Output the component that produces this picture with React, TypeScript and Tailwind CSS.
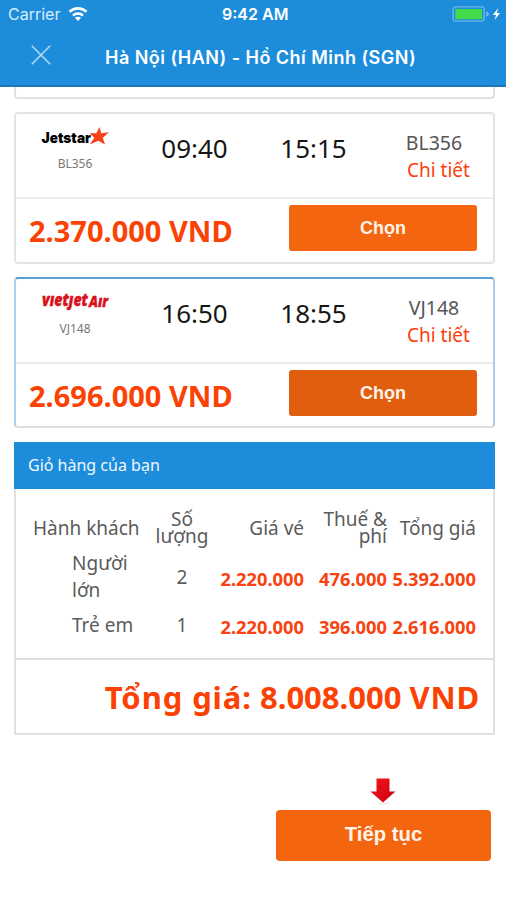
import clsx from "clsx"

const flights = [
  { code: "BL356", depart: "09:40", arrive: "15:15", price: "2.370.000", airline: "jetstar", active: false },
  { code: "VJ148", depart: "16:50", arrive: "18:55", price: "2.696.000", airline: "vietjet", active: true },
]

const JetstarLogo = () => (
  <svg width="70" height="24" viewBox="0 0 70 24" className="overflow-visible">
    <text
      x="0.5"
      y="16.5"
      textLength="49.5"
      lengthAdjust="spacingAndGlyphs"
      className="fill-black font-['Inter'] text-[14.5px] font-black"
    >
      Jetstar
    </text>
    <path
      d="M58.5 1 L60.3 7.2 L68 6.2 L61.8 11.8 L64 18.4 L57.4 14.7 L48.8 18.5 L53.3 11.8 L48.6 7.3 L55.3 7.3 Z"
      fill="#f9421a"
    />
  </svg>
)

const VietjetLogo = () => (
  <svg width="70" height="24" viewBox="0 0 70 24" className="overflow-visible">
    <g fill="#d9121c" stroke="#d9121c" strokeWidth="0.4" className="font-['Open_Sans'] font-extrabold italic">
      <text x="1" y="14.5" textLength="46" lengthAdjust="spacingAndGlyphs" fontSize="17">
        vıetȷet
      </text>
      <text x="48" y="15.5" textLength="19" lengthAdjust="spacingAndGlyphs" fontSize="15">
        Aır
      </text>
    </g>
  </svg>
)

const StatusBar = () => (
  <div className="relative flex h-7 items-center justify-between pl-2 pr-[5px]">
    <div className="flex items-center">
      <span className="w-[60px] text-[16px] text-[#d8ecfb]">Carrier</span>
      <svg width="20" height="16" viewBox="0 0 20 16" fill="none" stroke="#fff" strokeWidth="2.6">
        <path d="M1.5 5.8 C6.3 1.2 13.7 1.2 18.5 5.8" />
        <path d="M5 9.5 C7.8 6.9 12.2 6.9 15 9.5" />
        <path d="M10 15 L6.9 11.8 C8.6 10.3 11.4 10.3 13.1 11.8 Z" fill="#fff" stroke="none" />
      </svg>
    </div>
    <span className="absolute left-[222px] top-0.5 text-[16px] leading-6 font-semibold text-white">9:42 AM</span>
    <svg width="49" height="16" viewBox="0 0 49 16">
      <rect x="1.2" y="0.9" width="31" height="14.2" rx="2.5" fill="none" stroke="#69b5ea" strokeWidth="1.4" />
      <rect x="3.2" y="2.9" width="27" height="10.4" rx="0.8" fill="#43da4b" />
      <path d="M34 5.5 Q37 6 37 8 Q37 10 34 10.5 Z" fill="#69b5ea" />
      <path d="M46.2 2 L40.8 9 H44 L42.6 14 L48 7 H44.8 Z" fill="#fff" />
    </svg>
  </div>
)

const Header = () => (
  <header className="h-[87px] border-b-2 border-[#1c78b8] bg-[#1d8ddb] font-['Inter',sans-serif]">
    <StatusBar />
    <div className="flex h-[57px] items-center pl-[31px]">
      <svg width="20" height="20" viewBox="0 0 20 20" stroke="#b5dcf8" strokeWidth="1.5" className="-mt-1">
        <path d="M0.8 0.8 L19.2 19.2 M19.2 0.8 L0.8 19.2" />
      </svg>
      <h1 className="ml-[54px] mt-0.5 whitespace-nowrap text-[18px] font-semibold tracking-[0.46px] text-white">
        Hà Nội (HAN) - Hồ Chí Minh (SGN)
      </h1>
    </div>
  </header>
)

const FlightCard = ({ flight }: { flight: (typeof flights)[number] }) => (
  <div
    className={clsx(
      "rounded-[4px] border-2",
      flight.active ? "h-[151px] border-[#a9cfec] border-t-[#559fd6] border-b-[#dedede]" : "h-[152px] border-[#e3e3e3]"
    )}
  >
    <div className="flex h-[85px] border-b-2 border-[#ececec]">
      <div className="flex w-[119px] flex-col items-center pt-3">
        {flight.airline === "jetstar" ? <JetstarLogo /> : <VietjetLogo />}
        <span className="mt-1.5 -ml-px text-[12px] leading-4 text-[#777]">{flight.code}</span>
      </div>
      <span className="w-[119px] pt-4 text-center text-[26px] leading-9 text-[#161616]">{flight.depart}</span>
      <span className="w-[119px] pt-4 text-center text-[26px] leading-9 text-[#161616]">{flight.arrive}</span>
      <div className="flex flex-col pl-8 pt-[15px] text-[19px] leading-7">
        <span className="w-[58px] text-center text-[19.5px] text-[#555]">{flight.code}</span>
        <a className="-mt-px pl-0.5 text-[#fb4010]">Chi tiết</a>
      </div>
    </div>
    <div className="flex items-start justify-between pl-[13px] pr-4 pt-1.5">
      <span className="whitespace-nowrap pt-[3px] text-[29px] font-bold leading-[46px] text-[#fb4205]">
        {flight.price} VND
      </span>
      <button
        className={clsx(
          "h-[46px] w-[188px] rounded-[3px] font-['Liberation_Sans'] text-[18px] font-bold text-[#fff3ea]",
          flight.active ? "bg-[#e05e0e]" : "bg-[#f4650f]"
        )}
      >
        Chọn
      </button>
    </div>
  </div>
)

const Cart = () => (
  <section className="h-[293px] border-2 border-t-0 border-[#e0e0e0]">
    <h2 className="-mx-0.5 h-[47px] bg-[#1d8ddb] pl-3.5 text-[16px] leading-[47px] text-[#f0f8ff]">Giỏ hàng của bạn</h2>
    <div className="h-[171px] border-b-2 border-[#dedede] pl-[17px] pt-[22px] text-[19px] text-[#5b5b5b]">
      <div className="grid h-[34px] grid-cols-[108px_82px_81px_83px_89px] items-center whitespace-nowrap text-right leading-[17px]">
        <span className="text-left">Hành khách</span>
        <span className="text-center">
          Số
          <br />
          lượng
        </span>
        <span>Giá vé</span>
        <span>
          Thuế &<br />
          phí
        </span>
        <span>Tổng giá</span>
      </div>
      <div className="mt-[3px] grid h-[58px] grid-cols-[108px_82px_81px_83px_89px] items-center text-right leading-[27px]">
        <span className="pl-[39px] text-left">Người lớn</span>
        <span className="text-center">2</span>
        <span className="-ml-4 pt-[3px] text-[18.3px] font-bold text-[#f84210]">2.220.000</span>
        <span className="pt-[3px] text-[18.3px] font-bold text-[#f84210]">476.000</span>
        <span className="pt-[3px] text-[18.3px] font-bold text-[#f84210]">5.392.000</span>
      </div>
      <div className="mt-px grid h-9 grid-cols-[108px_82px_81px_83px_89px] items-center text-right leading-[27px]">
        <span className="whitespace-nowrap pl-[39px] text-left">Trẻ em</span>
        <span className="text-center">1</span>
        <span className="-ml-4 pt-[3px] text-[18.3px] font-bold text-[#f84210]">2.220.000</span>
        <span className="pt-[3px] text-[18.3px] font-bold text-[#f84210]">396.000</span>
        <span className="pt-[3px] text-[18.3px] font-bold text-[#f84210]">2.616.000</span>
      </div>
    </div>
    <p className="whitespace-nowrap pr-[13px] pt-3 text-right text-[31px] font-bold leading-[50px] text-[#fb4205]">
      <span className="tracking-[0.9px]">Tổng giá:</span> 8.008.000 <span className="tracking-[0.8px]">VND</span>
    </p>
  </section>
)

const App = () => {
  return (
    <div className="h-[900px] w-[506px] overflow-hidden bg-white font-['Noto_Sans',sans-serif]">
      <Header />
      <main className="flex flex-col px-[11px] pl-3.5">
        <div className="h-3 rounded-b-[4px] border-2 border-t-0 border-[#e0e0e0]" />
        <div className="mt-[13px] flex flex-col gap-[13px]">
          {flights.map((flight) => (
            <FlightCard key={flight.code} flight={flight} />
          ))}
        </div>
        <div className="mt-3.5">
          <Cart />
        </div>
        <div className="mr-1 mt-[42px] flex flex-col self-end">
          <svg width="26" height="28" viewBox="0 0 26 28" className="ml-[94px]">
            <defs>
              <linearGradient id="arrow" x1="0" y1="0" x2="1" y2="1">
                <stop offset="0" stopColor="#f5151b" />
                <stop offset="1" stopColor="#c80010" />
              </linearGradient>
            </defs>
            <ellipse cx="14" cy="26.5" rx="7" ry="1" fill="#ececec" />
            <path d="M6.5 1.5 H19.5 V14.5 H25.5 L13 25.5 L0.5 14.5 H6.5 Z" fill="url(#arrow)" />
          </svg>
          <button className="mt-[5px] h-[51px] w-[215px] rounded-[4px] bg-[#f4650f] pb-0.5 font-['Liberation_Sans'] text-[20.3px] font-bold text-[#fff3ea]">
            Tiếp tục
          </button>
        </div>
      </main>
    </div>
  )
}
export default App
